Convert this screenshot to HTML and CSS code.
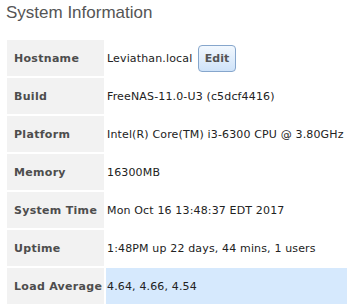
FILE: index.html
```html
<!DOCTYPE html>
<html>

<head>
	<title>System Information</title>
	<meta charset="utf-8">
	<link rel="stylesheet" href="styles.css">
</head>

<body>
	<div class="painel">
		<h1 class="titulo">System Information</h1>
		<table class="info">
			<tr>
				<th>Hostname</th>
				<td>Leviathan.local <button class="editar">Edit</button></td>
			</tr>
			<tr>
				<th>Build</th>
				<td>FreeNAS-11.0-U3 (c5dcf4416)</td>
			</tr>
			<tr>
				<th>Platform</th>
				<td>Intel(R) Core(TM) i3-6300 CPU @ 3.80GHz</td>
			</tr>
			<tr>
				<th>Memory</th>
				<td>16300MB</td>
			</tr>
			<tr>
				<th>System Time</th>
				<td>Mon Oct 16 13:48:37 EDT 2017</td>
			</tr>
			<tr>
				<th>Uptime</th>
				<td>1:48PM up 22 days, 44 mins, 1 users</td>
			</tr>
			<tr class="marcado">
				<th>Load Average</th>
				<td>4.64, 4.66, 4.54</td>
			</tr>
		</table>
	</div>
</body>

</html>
```

FILE: styles.css
```css
* {
	margin: 0;
	padding: 0;
}

body {
	background-color: #fff;
	font-family: "DejaVu Sans", Verdana, sans-serif;
	font-size: 11px;
	color: #222;
}

.painel {
	padding: 3px 5px;
}

.titulo {
	font-family: "Liberation Sans", Arial, sans-serif;
	font-weight: normal;
	font-size: 17px;
	color: #555;
	padding-left: 1px;
	height: 35px;
}

.info {
	border-spacing: 2px;
	width: 344px;
	table-layout: fixed;
}

.info th {
	background-color: #f2f2f2;
	color: #4d4d4d;
	text-align: left;
	font-weight: bold;
	letter-spacing: 0.3px;
	width: 89px;
	height: 36px;
	padding: 0 1px 0 7px;
	white-space: nowrap;
}

.info td {
	padding: 0 1px;
	height: 36px;
	letter-spacing: 0.15px;
	white-space: nowrap;
}

.marcado td {
	background-color: #d6e9fd;
}

.editar {
	font-family: "DejaVu Sans", Verdana, sans-serif;
	font-size: 11px;
	font-weight: bold;
	letter-spacing: 0;
	color: #555;
	width: 38px;
	height: 27px;
	margin-left: 2px;
	border: 1px solid #86a6cc;
	border-radius: 4px;
	background: linear-gradient(#f2f8fe, #cfe3f9);
	vertical-align: middle;
}
```
